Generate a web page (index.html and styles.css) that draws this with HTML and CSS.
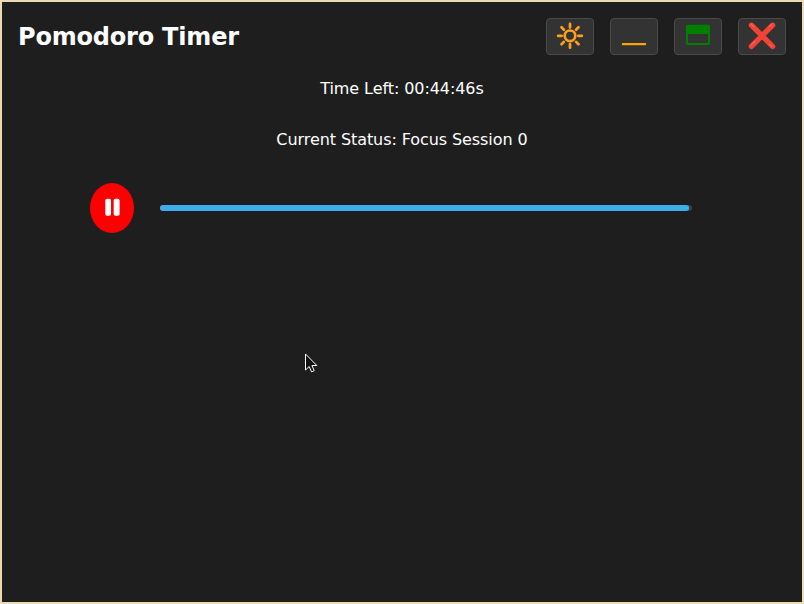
FILE: index.html
```html
<!DOCTYPE html>
<html lang="en">
<head>
<meta charset="utf-8">
<title>Pomodoro Timer</title>
<link rel="stylesheet" href="styles.css">
</head>
<body>
<main class="window">
  <header class="titlebar">
    <h1 class="title">Pomodoro Timer</h1>
    <div class="controls">
      <button class="control" aria-label="Theme">
        <svg viewBox="0 0 46 35" fill="none" stroke="#ffa01c" stroke-width="2.700" stroke-linecap="round">
          <circle cx="23" cy="16.8" r="5.3"/>
          <path d="M23 4.900v3.600M23 25.100v3.600M11.100 16.800h3.600M31.300 16.800h3.600M14.500 8.300l2.400 2.400M29.100 22.900l2.400 2.400M14.500 25.300l2.400-2.400M29.100 10.700l2.400-2.400"/>
        </svg>
      </button>
      <button class="control" aria-label="Minimize">
        <svg viewBox="0 0 46 35"><path fill="#ffa500" d="M11 24h24v2.200H11z"/></svg>
      </button>
      <button class="control" aria-label="Maximize">
        <svg viewBox="0 0 46 35"><path fill="#008000" fill-rule="evenodd" d="M13 5.700h20a2 2 0 0 1 2 2v16.400a2 2 0 0 1-2 2H13a2 2 0 0 1-2-2V7.700a2 2 0 0 1 2-2zM13 15v9h20v-9z"/></svg>
      </button>
      <button class="control" aria-label="Close">
        <svg viewBox="0 0 46 35" fill="none" stroke-linecap="round">
          <path stroke="#f44336" stroke-width="5.300" d="M12.400 6.200l21.200 21.200M33.600 6.200L12.400 27.400"/>
          <path stroke="#ff7468" stroke-width="1" d="M12.100 5l2.500 2.500M30.200 25l2.500 2.500M32.800 5l-2.500 2.500M12.200 26l4-4"/>
        </svg>
      </button>
    </div>
  </header>
  <p class="label">Time Left: 00:44:46s</p>
  <p class="label">Current Status: Focus Session 0</p>
  <section class="session">
    <button class="pause" aria-label="Pause">
      <svg viewBox="0 0 44 50" fill="#fff"><rect x="15.300" y="15.700" width="5.700" height="17" rx="1.800"/><rect x="23.700" y="15.700" width="5.900" height="17" rx="1.800"/></svg>
    </button>
    <div class="track"><div class="progress"></div></div>
  </section>
</main>
<svg class="pointer" viewBox="0 0 13 20"><path d="M.5 1v16l3.700-3.500 2.400 5.400 2.600-1.200-2.300-5.200h4.900z" fill="#111" stroke="#fff"/></svg>
</body>
</html>
```
FILE: styles.css
```css
* { box-sizing: border-box; }
body { margin: 0; }
.window {
  height: 604px;
  padding: 16px;
  border: 2px solid #ebdbb2;
  background: #1e1e1e;
  color: #fff;
  font: 16px/19px "DejaVu Sans", sans-serif;
}
.titlebar {
  display: flex;
  align-items: center;
  justify-content: space-between;
  height: 37px;
}
.title {
  margin: 0;
  font-size: 24px;
  line-height: 28px;
  font-weight: 700;
  letter-spacing: -0.2px;
}
.controls { display: flex; gap: 16px; }
.control {
  width: 48px;
  height: 37px;
  padding: 0;
  border: 1px solid #4a4a4a;
  border-radius: 4px;
  background: #333;
}
.control svg, .pause svg { display: block; width: 100%; height: 100%; }
.label { margin: 24px 0 0; text-align: center; letter-spacing: -0.08px; }
.label + .label { margin-top: 32px; }
.session {
  display: flex;
  align-items: center;
  gap: 26px;
  margin: 34px 94px 0 72px;
}
.pause {
  flex: none;
  width: 44px;
  height: 50px;
  padding: 0;
  border: 0;
  border-radius: 50%;
  background: #f00;
}
.track { flex: 1; height: 6px; border-radius: 3px; background: #404040; }
.progress { width: 99.5%; height: 6px; border-radius: 3px; background: #3daee9; }
.pointer { position: absolute; left: 305px; top: 353px; width: 13px; height: 20px; }
```
